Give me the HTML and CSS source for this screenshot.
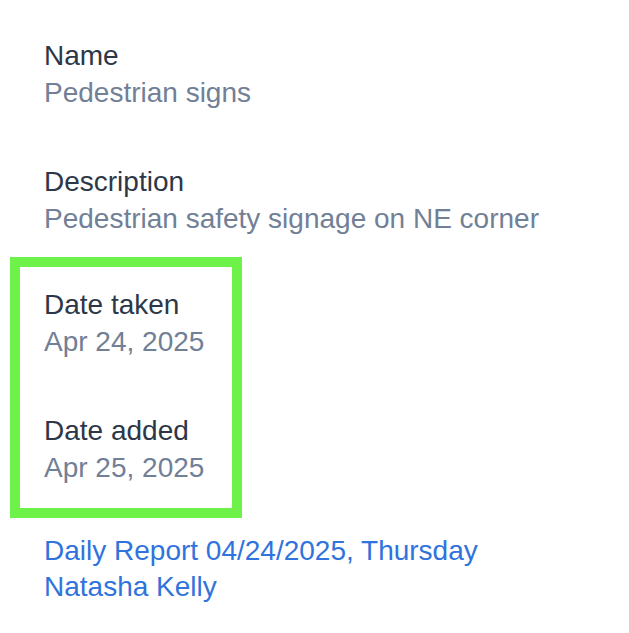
FILE: index.html
```html
<!DOCTYPE html>
<html lang="en">
<head>
    <meta charset="UTF-8">
    <meta name="viewport" content="width=device-width, initial-scale=1.0">
    <title>Photo details</title>
    <link rel="stylesheet" href="styles.css">
</head>
<body>
    <main class="details">
        <div class="field">
            <div class="field-label">Name</div>
            <div class="field-value">Pedestrian signs</div>
        </div>
        <div class="field">
            <div class="field-label">Description</div>
            <div class="field-value">Pedestrian safety signage on NE corner</div>
        </div>
        <!-- highlighted dates -->
        <div class="highlight">
            <div class="field">
                <div class="field-label">Date taken</div>
                <div class="field-value">Apr 24, 2025</div>
            </div>
            <div class="field">
                <div class="field-label">Date added</div>
                <div class="field-value">Apr 25, 2025</div>
            </div>
        </div>
        <div class="links">
            <a href="#">Daily Report 04/24/2025, Thursday</a>
            <a href="#">Natasha Kelly</a>
        </div>
    </main>
</body>
</html>
```

FILE: styles.css
```css
body {
    font-family: "Liberation Sans", Arial, sans-serif;
    font-size: 28px;
    line-height: 37px;
    background-color: white;
    margin: 0;
    padding: 0;
}

.details {
    padding: 37px 0 0 44px;
}

.field + .field {
    margin-top: 52px;
}

.field-label {
    color: #2d3748;
}

.field-value {
    color: #718096;
}

.highlight {
    box-sizing: border-box;
    width: 232px;
    margin: 20px 0 15px -34px;
    padding: 19px 0 22px 24px;
    border: 10px solid #6ef24a;
}

.links {
    display: flex;
    flex-direction: column;
    line-height: 36px;
}

.links a {
    color: #3073dc;
    text-decoration: none;
}
```
